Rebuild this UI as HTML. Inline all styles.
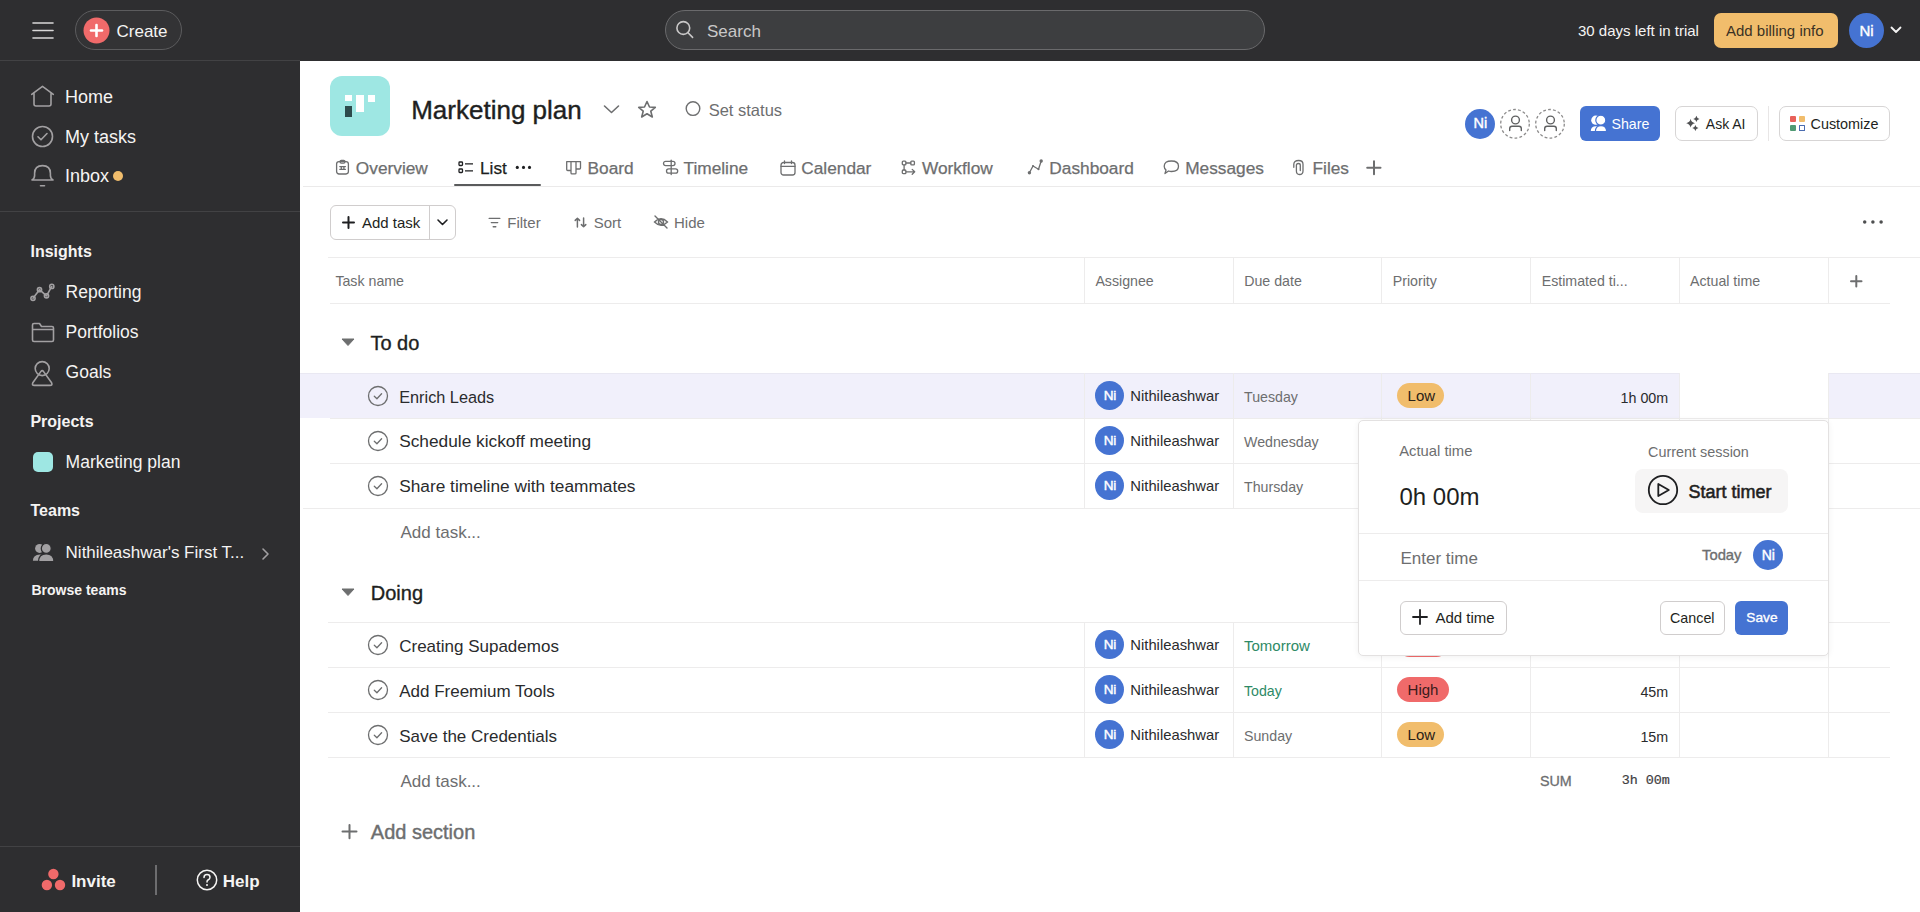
<!DOCTYPE html>
<html><head><meta charset="utf-8">
<style>
*{box-sizing:border-box;margin:0;padding:0}
html,body{width:1920px;height:912px;overflow:hidden;background:#fff;font-family:"Liberation Sans",sans-serif;position:relative}
.abs{position:absolute}
.t{position:absolute;white-space:nowrap;line-height:1}
svg{position:absolute;overflow:visible}
</style></head>
<body>
<div class="abs" style="left:0px;top:0px;width:1920px;height:61px;background:#2e2e30"></div>
<svg style="left:32px;top:22px;" width="22" height="17" viewBox="0 0 22 17"><g stroke="#d9d8d8" stroke-width="1.6" stroke-linecap="round"><line x1="1" y1="1" x2="21" y2="1"/><line x1="1" y1="8.5" x2="21" y2="8.5"/><line x1="1" y1="16" x2="21" y2="16"/></g></svg>
<div class="abs" style="left:75px;top:10px;width:107px;height:40px;border-radius:20px;border:1px solid #5c5c5e;background:#333335"></div>
<svg style="left:83px;top:17px;" width="27" height="27" viewBox="0 0 27 27"><circle cx="13.5" cy="13.5" r="13" fill="#f06a6a"/><g stroke="#fff" stroke-width="2.6" stroke-linecap="round"><line x1="13.5" y1="8" x2="13.5" y2="19"/><line x1="8" y1="13.5" x2="19" y2="13.5"/></g></svg>
<div class="t" style="left:116.50px;top:22.61px;font-size:17px;color:#f5f4f3;font-weight:400;font-family:'Liberation Sans',sans-serif;">Create</div>
<div class="abs" style="left:665px;top:10px;width:600px;height:40px;border-radius:20px;border:1px solid #6a6a6c;background:#3d3e40"></div>
<svg style="left:675px;top:19px;" width="20" height="20" viewBox="0 0 20 20"><circle cx="8.3" cy="9" r="6.4" stroke="#c9c8c8" stroke-width="1.6" fill="none"/><line x1="13" y1="13.7" x2="17.6" y2="18.4" stroke="#c9c8c8" stroke-width="1.6" stroke-linecap="round"/></svg>
<div class="t" style="left:707.00px;top:22.61px;font-size:17px;color:#c9c8c8;font-weight:400;font-family:'Liberation Sans',sans-serif;">Search</div>
<div class="t" style="left:1578.00px;top:23.30px;font-size:15px;color:#f5f4f3;font-weight:400;font-family:'Liberation Sans',sans-serif;">30 days left in trial</div>
<div class="abs" style="left:1714px;top:13px;width:124px;height:35px;border-radius:7px;background:#f1bd6c"></div>
<div class="t" style="left:1726.00px;top:23.30px;font-size:15px;color:#3b3224;font-weight:400;font-family:'Liberation Sans',sans-serif;">Add billing info</div>
<div class="abs" style="left:1849px;top:13px;width:35px;height:35px;border-radius:50%;background:#4573d2"></div>
<div class="t" style="left:1766.50px;width:200px;text-align:center;top:23.17px;font-size:15px;color:#fff;font-weight:400;font-family:'Liberation Sans',sans-serif;-webkit-text-stroke:0.4px #fff">Ni</div>
<svg style="left:1890px;top:26px;" width="12" height="8" viewBox="0 0 12 8"><polyline points="1.5,1.5 6,6 10.5,1.5" stroke="#f5f4f3" stroke-width="1.8" fill="none" stroke-linecap="round" stroke-linejoin="round"/></svg>
<div class="abs" style="left:0px;top:61px;width:300px;height:851px;background:#2e2e30"></div>
<div class="abs" style="left:0px;top:60px;width:300px;height:1px;background:#424244"></div>
<svg style="left:31px;top:86px;" width="23" height="22" viewBox="0 0 23 22"><path stroke="#a2a0a2" fill="none" stroke-width="1.6" stroke-linecap="round" stroke-linejoin="round" d="M0.7 8.3 L11.5 0.4 L22.3 8.3 M3 6.5 V18 Q3 20 5 20 H18 Q20 20 20 18 V6.5"/></svg>
<div class="t" style="left:65.00px;top:87.86px;font-size:18px;color:#f5f4f3;font-weight:400;font-family:'Liberation Sans',sans-serif;">Home</div>
<svg style="left:31px;top:125px;" width="23" height="23" viewBox="0 0 23 23"><circle stroke="#a2a0a2" fill="none" stroke-width="1.6" stroke-linecap="round" stroke-linejoin="round" cx="11.5" cy="11.5" r="10"/><polyline stroke="#a2a0a2" fill="none" stroke-width="1.6" stroke-linecap="round" stroke-linejoin="round" points="7,11.8 10,14.8 16,8.5"/></svg>
<div class="t" style="left:65.00px;top:127.76px;font-size:18px;color:#f5f4f3;font-weight:400;font-family:'Liberation Sans',sans-serif;">My tasks</div>
<svg style="left:31px;top:165px;" width="23" height="23" viewBox="0 0 23 23"><path stroke="#a2a0a2" fill="none" stroke-width="1.6" stroke-linecap="round" stroke-linejoin="round" d="M1 15 Q3.6 13.5 3.6 10.5 V8.3 Q3.6 0.6 11.5 0.6 Q19.4 0.6 19.4 8.3 V10.5 Q19.4 13.5 22 15 Z M9.5 20.8 H13.5"/></svg>
<div class="t" style="left:65.00px;top:167.46px;font-size:18px;color:#f5f4f3;font-weight:400;font-family:'Liberation Sans',sans-serif;">Inbox</div>
<div class="abs" style="left:113px;top:171px;width:10px;height:10px;border-radius:50%;background:#f1bd6c"></div>
<div class="abs" style="left:0px;top:211px;width:300px;height:1px;background:#424244"></div>
<div class="t" style="left:30.50px;top:243.66px;font-size:16px;color:#f5f4f3;font-weight:700;font-family:'Liberation Sans',sans-serif;">Insights</div>
<svg style="left:31px;top:283px;" width="24" height="18" viewBox="0 0 24 18"><path stroke="#a2a0a2" fill="none" stroke-width="1.6" stroke-linecap="round" stroke-linejoin="round" d="M2 15.3 L8.5 6.7 L15.5 12.8 L20.8 3.4"/><circle stroke="#a2a0a2" fill="none" stroke-width="1.6" stroke-linecap="round" stroke-linejoin="round" cx="2" cy="15.3" r="2.1" fill="#2e2e30"/><circle stroke="#a2a0a2" fill="none" stroke-width="1.6" stroke-linecap="round" stroke-linejoin="round" cx="8.5" cy="6.7" r="2.1" fill="#2e2e30"/><circle stroke="#a2a0a2" fill="none" stroke-width="1.6" stroke-linecap="round" stroke-linejoin="round" cx="15.5" cy="12.8" r="2.1" fill="#2e2e30"/><circle stroke="#a2a0a2" fill="none" stroke-width="1.6" stroke-linecap="round" stroke-linejoin="round" cx="20.8" cy="3.4" r="2.1" fill="#2e2e30"/></svg>
<div class="t" style="left:65.60px;top:284.49px;font-size:17.5px;color:#f5f4f3;font-weight:400;font-family:'Liberation Sans',sans-serif;">Reporting</div>
<svg style="left:31px;top:322px;" width="24" height="21" viewBox="0 0 24 21"><path stroke="#a2a0a2" fill="none" stroke-width="1.6" stroke-linecap="round" stroke-linejoin="round" d="M1.5 3 Q1.5 1.5 3 1.5 H8.5 L10.5 4.5 H21 Q22.5 4.5 22.5 6 V18 Q22.5 19.5 21 19.5 H3 Q1.5 19.5 1.5 18 Z M1.5 7.5 H22.5"/></svg>
<div class="t" style="left:65.60px;top:323.99px;font-size:17.5px;color:#f5f4f3;font-weight:400;font-family:'Liberation Sans',sans-serif;">Portfolios</div>
<svg style="left:31px;top:361.5px;" width="23" height="26" viewBox="0 0 23 26"><circle stroke="#a2a0a2" fill="none" stroke-width="1.6" stroke-linecap="round" stroke-linejoin="round" cx="11.2" cy="6.6" r="7"/><path stroke="#a2a0a2" fill="none" stroke-width="1.6" stroke-linecap="round" stroke-linejoin="round" d="M9.8 9.6 Q11.2 7.6 12.6 9.6 L20.6 20.8 Q21.8 23.4 19 23.4 H3.4 Q0.6 23.4 1.8 20.8 Z"/></svg>
<div class="t" style="left:65.60px;top:364.19px;font-size:17.5px;color:#f5f4f3;font-weight:400;font-family:'Liberation Sans',sans-serif;">Goals</div>
<div class="t" style="left:30.40px;top:413.66px;font-size:16px;color:#f5f4f3;font-weight:700;font-family:'Liberation Sans',sans-serif;">Projects</div>
<div class="abs" style="left:33px;top:452px;width:20px;height:20px;border-radius:5px;background:#9ee7e3"></div>
<div class="t" style="left:65.60px;top:454.19px;font-size:17.5px;color:#f5f4f3;font-weight:400;font-family:'Liberation Sans',sans-serif;">Marketing plan</div>
<div class="t" style="left:30.50px;top:503.46px;font-size:16px;color:#f5f4f3;font-weight:700;font-family:'Liberation Sans',sans-serif;">Teams</div>
<svg style="left:32px;top:543px;" width="22" height="18" viewBox="0 0 22 18"><g fill="#a2a0a2"><circle cx="7.6" cy="5.4" r="4.5"/><path d="M0.9 17.8 Q0.9 11.6 8 11.4 Q13 11.4 13 17.8 Z"/><path d="M6.6 18.6 Q6.6 10.8 14.2 10.8 Q21.9 10.8 21.9 18.6 Z" stroke="#2e2e30" stroke-width="1.3"/><circle cx="14.3" cy="5.4" r="5" stroke="#2e2e30" stroke-width="1.3"/></g></svg>
<div class="t" style="left:65.60px;top:544.41px;font-size:17px;color:#f5f4f3;font-weight:400;font-family:'Liberation Sans',sans-serif;">Nithileashwar's First T...</div>
<svg style="left:261px;top:547px;" width="9" height="14" viewBox="0 0 9 14"><polyline points="2,2 7,7 2,12" stroke="#a2a0a2" stroke-width="1.6" fill="none" stroke-linecap="round" stroke-linejoin="round"/></svg>
<div class="t" style="left:31.50px;top:583.35px;font-size:14px;color:#f5f4f3;font-weight:700;font-family:'Liberation Sans',sans-serif;">Browse teams</div>
<div class="abs" style="left:0px;top:846px;width:300px;height:1px;background:#424244"></div>
<svg style="left:41px;top:868px;" width="26" height="24" viewBox="0 0 26 24"><g fill="#f06a6a"><circle cx="12.4" cy="6" r="5.2"/><circle cx="5.9" cy="17" r="5.2"/><circle cx="19" cy="17" r="5.2"/></g></svg>
<div class="t" style="left:71.40px;top:872.51px;font-size:17px;color:#f5f4f3;font-weight:700;font-family:'Liberation Sans',sans-serif;">Invite</div>
<div class="abs" style="left:155px;top:865px;width:2px;height:30px;background:#6d6d6f"></div>
<svg style="left:196px;top:869px;" width="22" height="22" viewBox="0 0 22 22"><circle cx="11" cy="11" r="9.7" stroke="#f5f4f3" stroke-width="1.5" fill="none"/><path d="M8 8.5 Q8 5.5 11 5.5 Q14 5.5 14 8.2 Q14 10 12 11 Q11 11.6 11 13" stroke="#f5f4f3" stroke-width="1.5" fill="none" stroke-linecap="round"/><circle cx="11" cy="16" r="1" fill="#f5f4f3"/></svg>
<div class="t" style="left:222.70px;top:872.51px;font-size:17px;color:#f5f4f3;font-weight:700;font-family:'Liberation Sans',sans-serif;">Help</div>
<div class="abs" style="left:330px;top:76px;width:60px;height:60px;border-radius:12px;background:#9ee7e3"></div>
<div class="abs" style="left:345px;top:95px;width:7px;height:6px;background:#fff"></div>
<div class="abs" style="left:356px;top:95px;width:8px;height:17px;background:#fff"></div>
<div class="abs" style="left:368px;top:95px;width:7px;height:6.5px;background:#fff"></div>
<div class="abs" style="left:345px;top:106px;width:7px;height:11px;background:#2d4b4c"></div>
<div class="t" style="left:411.20px;top:96.79px;font-size:26px;color:#1e1f21;font-weight:400;font-family:'Liberation Sans',sans-serif;-webkit-text-stroke:0.4px #1e1f21">Marketing plan</div>
<svg style="left:603px;top:104px;" width="18" height="10" viewBox="0 0 18 10"><polyline stroke="#6d6e6f" fill="none" stroke-width="1.6" stroke-linecap="round" stroke-linejoin="round" points="1.5,2 8.5,8.5 15.5,2"/></svg>
<svg style="left:637px;top:100px;" width="20" height="19" viewBox="0 0 20 19"><path stroke="#6d6e6f" fill="none" stroke-width="1.6" stroke-linecap="round" stroke-linejoin="round" d="M10 1.5 L12.5 7 L18.3 7.4 L13.8 11.2 L15.3 17 L10 13.8 L4.7 17 L6.2 11.2 L1.7 7.4 L7.5 7 Z"/></svg>
<svg style="left:685px;top:101px;" width="16" height="16" viewBox="0 0 16 16"><circle cx="8" cy="7.6" r="6.8" stroke="#6d6e6f" stroke-width="1.4" fill="none"/></svg>
<div class="t" style="left:708.70px;top:101.73px;font-size:16.5px;color:#6d6e6f;font-weight:400;font-family:'Liberation Sans',sans-serif;">Set status</div>
<div class="abs" style="left:1465px;top:108.5px;width:30px;height:30px;border-radius:50%;background:#4573d2"></div>
<div class="t" style="left:1380.30px;width:200px;text-align:center;top:116.42px;font-size:14.5px;color:#fff;font-weight:400;font-family:'Liberation Sans',sans-serif;-webkit-text-stroke:0.45px #fff">Ni</div>
<svg style="left:1500px;top:109px;" width="30" height="30" viewBox="0 0 30 30"><circle cx="15" cy="14.8" r="14.3" stroke="#8c8b8b" stroke-width="1.3" fill="none" stroke-dasharray="2.8 2.2"/><circle cx="15.5" cy="11" r="3.9" stroke="#5f6061" stroke-width="1.4" fill="none"/><path d="M9.7 21.5 V19.6 Q9.7 17.3 12 17.3 H19 Q21.3 17.3 21.3 19.6 V21.5" stroke="#5f6061" stroke-width="1.4" fill="none" stroke-linecap="round"/></svg>
<svg style="left:1535px;top:109px;" width="30" height="30" viewBox="0 0 30 30"><circle cx="15" cy="14.8" r="14.3" stroke="#8c8b8b" stroke-width="1.3" fill="none" stroke-dasharray="2.8 2.2"/><circle cx="15.5" cy="11" r="3.9" stroke="#5f6061" stroke-width="1.4" fill="none"/><path d="M9.7 21.5 V19.6 Q9.7 17.3 12 17.3 H19 Q21.3 17.3 21.3 19.6 V21.5" stroke="#5f6061" stroke-width="1.4" fill="none" stroke-linecap="round"/></svg>
<div class="abs" style="left:1580px;top:106px;width:80px;height:35px;border-radius:6px;background:#4573d2"></div>
<svg style="left:1590px;top:114px;" width="17" height="18" viewBox="0 0 17 18"><g fill="#fff"><circle cx="5.8" cy="6.2" r="4.6"/><path d="M0.8 17 Q0.8 12.4 6 12.3 Q10 12.3 10 17 Z"/><path d="M5.4 17.6 Q5.4 11.7 11 11.7 Q16.6 11.7 16.6 17.6 Z" stroke="#4573d2" stroke-width="1.2"/><circle cx="10.8" cy="6.2" r="5" stroke="#4573d2" stroke-width="1.2"/></g></svg>
<div class="t" style="left:1611.50px;top:116.98px;font-size:14.2px;color:#fff;font-weight:400;font-family:'Liberation Sans',sans-serif;">Share</div>
<div class="abs" style="left:1675px;top:106px;width:83px;height:35px;border-radius:7px;border:1px solid #d7d5d5;background:#fff"></div>
<svg style="left:1686px;top:115px;" width="15" height="17" viewBox="0 0 15 17"><path fill="#505153" d="M4.6 3.799999999999999 Q5.303999999999999 7.4959999999999996 9.0 8.2 Q5.303999999999999 8.904 4.6 12.6 Q3.8959999999999995 8.904 0.1999999999999993 8.2 Q3.8959999999999995 7.4959999999999996 4.6 3.799999999999999Z M10.4 0.7999999999999998 Q10.896 3.404 13.5 3.9 Q10.896 4.396 10.4 7.0 Q9.904 4.396 7.300000000000001 3.9 Q9.904 3.404 10.4 0.7999999999999998Z M9.4 9.9 Q9.896 12.504 12.5 13 Q9.896 13.496 9.4 16.1 Q8.904 13.496 6.300000000000001 13 Q8.904 12.504 9.4 9.9Z"/></svg>
<div class="t" style="left:1705.80px;top:117.35px;font-size:14px;color:#1e1f21;font-weight:400;font-family:'Liberation Sans',sans-serif;">Ask AI</div>
<div class="abs" style="left:1768px;top:106px;width:1px;height:35px;background:#e8e6e6"></div>
<div class="abs" style="left:1779px;top:106px;width:111px;height:35px;border-radius:7px;border:1px solid #d7d5d5;background:#fff"></div>
<div class="abs" style="left:1790px;top:116px;width:5.9px;height:5.9px;background:#e8615a;border-radius:1px"></div>
<div class="abs" style="left:1799px;top:116px;width:5.9px;height:5.9px;background:#f1bd6c;border-radius:1px"></div>
<div class="abs" style="left:1790px;top:125px;width:5.9px;height:5.9px;background:#4f9a73;border-radius:1px"></div>
<div class="abs" style="left:1799px;top:125px;width:5.9px;height:5.9px;border:1.3px solid #4a6cb0;border-radius:0.5px"></div>
<div class="t" style="left:1810.50px;top:117.01px;font-size:14.4px;color:#1e1f21;font-weight:400;font-family:'Liberation Sans',sans-serif;">Customize</div>
<div class="abs" style="left:303px;top:186px;width:1617px;height:1px;background:#ebeaea"></div>
<svg style="left:335px;top:159px;" width="15" height="17" viewBox="0 0 15 17"><rect stroke="#6d6e6f" fill="none" stroke-width="1.3" stroke-linecap="round" stroke-linejoin="round" x="1.6" y="2.6" width="11.8" height="12.4" rx="2.4"/><rect stroke="#6d6e6f" fill="none" stroke-width="1.3" stroke-linecap="round" stroke-linejoin="round" fill="#fff" x="5" y="1.3" width="5" height="2.8" rx="1.3"/><path stroke="#6d6e6f" fill="none" stroke-width="1.3" stroke-linecap="round" stroke-linejoin="round" d="M4.8 7.6 H10.4 M4.8 10.3 H10.4 M6.3 7.6 V10.3 M8.9 7.6 V10.3" stroke-width="1.1"/></svg>
<div class="t" style="left:355.80px;top:160.36px;font-size:17.3px;color:#6d6e6f;font-weight:400;font-family:'Liberation Sans',sans-serif;-webkit-text-stroke:0.25px #6d6e6f">Overview</div>
<svg style="left:458px;top:161px;" width="16" height="13" viewBox="0 0 16 13"><rect stroke="#1e1f21" fill="none" stroke-width="1.3" x="1" y="1" width="3.5" height="3.5" rx="0.8"/><rect stroke="#1e1f21" fill="none" stroke-width="1.3" x="1" y="8" width="3.5" height="3.5" rx="0.8"/><path stroke="#1e1f21" stroke-width="1.3" d="M7 2.8 H15 M7 9.8 H15"/></svg>
<div class="t" style="left:480.00px;top:160.36px;font-size:17.3px;color:#1e1f21;font-weight:400;font-family:'Liberation Sans',sans-serif;-webkit-text-stroke:0.25px #1e1f21">List</div>
<svg style="left:512px;top:163px;" width="22" height="9" viewBox="0 0 22 9"><circle cx="5.3" cy="4.4" r="1.55" fill="#1e1f21"/><circle cx="11.5" cy="4.4" r="1.55" fill="#1e1f21"/><circle cx="17.5" cy="4.4" r="1.55" fill="#1e1f21"/></svg>
<div class="abs" style="left:454px;top:183.5px;width:87px;height:2.6px;background:#5a5b5c;border-radius:1px"></div>
<svg style="left:565px;top:160px;" width="17" height="15" viewBox="0 0 17 15"><path stroke="#6d6e6f" fill="none" stroke-width="1.3" stroke-linecap="round" stroke-linejoin="round" d="M1.7 1.6 H15.5 V8 Q15.5 9 14.5 9 H11 V12.9 Q11 13.9 10 13.9 H7 Q6 13.9 6 12.9 V10.5 H2.7 Q1.7 10.5 1.7 9.5 Z M6 1.6 V10.5 M11 1.6 V9"/></svg>
<div class="t" style="left:587.50px;top:160.36px;font-size:17.3px;color:#6d6e6f;font-weight:400;font-family:'Liberation Sans',sans-serif;-webkit-text-stroke:0.25px #6d6e6f">Board</div>
<svg style="left:662px;top:159px;" width="17" height="17" viewBox="0 0 17 17"><path stroke="#6d6e6f" fill="none" stroke-width="1.3" stroke-linecap="round" stroke-linejoin="round" d="M9.2 1.2 V15.5"/><rect stroke="#6d6e6f" fill="none" stroke-width="1.3" stroke-linecap="round" stroke-linejoin="round" x="1.5" y="2.4" width="11.5" height="4.2" rx="2.1"/><rect stroke="#6d6e6f" fill="none" stroke-width="1.3" stroke-linecap="round" stroke-linejoin="round" x="4.5" y="9.8" width="11.2" height="4.4" rx="2.2"/></svg>
<div class="t" style="left:683.50px;top:160.36px;font-size:17.3px;color:#6d6e6f;font-weight:400;font-family:'Liberation Sans',sans-serif;-webkit-text-stroke:0.25px #6d6e6f">Timeline</div>
<svg style="left:780px;top:160px;" width="16" height="16" viewBox="0 0 16 16"><rect stroke="#6d6e6f" fill="none" stroke-width="1.3" stroke-linecap="round" stroke-linejoin="round" x="1" y="2.5" width="14" height="12.5" rx="2.5"/><path stroke="#6d6e6f" fill="none" stroke-width="1.3" stroke-linecap="round" stroke-linejoin="round" d="M1 6.3 H15 M4.5 0.8 V3.5 M11.5 0.8 V3.5"/></svg>
<div class="t" style="left:801.25px;top:160.36px;font-size:17.3px;color:#6d6e6f;font-weight:400;font-family:'Liberation Sans',sans-serif;-webkit-text-stroke:0.25px #6d6e6f">Calendar</div>
<svg style="left:901px;top:160px;" width="16" height="15" viewBox="0 0 16 15"><rect stroke="#6d6e6f" fill="none" stroke-width="1.3" stroke-linecap="round" stroke-linejoin="round" x="1.3" y="1.2" width="3.6" height="3.6" rx="0.9"/><rect stroke="#6d6e6f" fill="none" stroke-width="1.3" stroke-linecap="round" stroke-linejoin="round" x="9.8" y="1.2" width="3.6" height="3.6" rx="0.9"/><rect stroke="#6d6e6f" fill="none" stroke-width="1.3" stroke-linecap="round" stroke-linejoin="round" x="1.3" y="10" width="3.6" height="3.6" rx="0.9"/><path stroke="#6d6e6f" fill="none" stroke-width="1.3" stroke-linecap="round" stroke-linejoin="round" d="M4.9 3 H9.8 M3.1 4.8 V10 M4.9 11.8 H13.6 M11.2 9.4 L13.7 11.8 L11.2 14.2"/></svg>
<div class="t" style="left:922.00px;top:160.36px;font-size:17.3px;color:#6d6e6f;font-weight:400;font-family:'Liberation Sans',sans-serif;-webkit-text-stroke:0.25px #6d6e6f">Workflow</div>
<svg style="left:1027px;top:159px;" width="17" height="17" viewBox="0 0 17 17"><path stroke="#6d6e6f" fill="none" stroke-width="1.3" stroke-linecap="round" stroke-linejoin="round" stroke-width="1.5" d="M2.4 13.8 L6 7 L11.5 10.3 L14.2 2"/><circle cx="2.4" cy="13.8" r="1.7" fill="#6d6e6f"/><circle cx="14.2" cy="2" r="1.7" fill="#6d6e6f"/><circle cx="6" cy="7" r="1" fill="#6d6e6f"/><circle cx="11.5" cy="10.3" r="1" fill="#6d6e6f"/></svg>
<div class="t" style="left:1049.30px;top:160.36px;font-size:17.3px;color:#6d6e6f;font-weight:400;font-family:'Liberation Sans',sans-serif;-webkit-text-stroke:0.25px #6d6e6f">Dashboard</div>
<svg style="left:1163px;top:160px;" width="17" height="15" viewBox="0 0 17 15"><path stroke="#6d6e6f" fill="none" stroke-width="1.3" stroke-linecap="round" stroke-linejoin="round" d="M8.5 1 Q15.5 1 15.5 6.3 Q15.5 11.5 8.5 11.5 Q7 11.5 5.5 11 L2 13.5 L3 10 Q1.2 8.5 1.2 6.3 Q1.2 1 8.5 1 Z"/></svg>
<div class="t" style="left:1185.20px;top:160.36px;font-size:17.3px;color:#6d6e6f;font-weight:400;font-family:'Liberation Sans',sans-serif;-webkit-text-stroke:0.25px #6d6e6f">Messages</div>
<svg style="left:1292px;top:159px;" width="13" height="17" viewBox="0 0 13 17"><path stroke="#6d6e6f" fill="none" stroke-width="1.3" stroke-linecap="round" stroke-linejoin="round" d="M1.8 8.3 V5.2 Q1.8 1.5 6.6 1.5 Q11 1.5 11 5.2 V12 Q11 15.5 7.5 15.5 Q4.4 15.5 4.4 12 V6.2 Q4.4 4.5 6.3 4.5 Q8.3 4.5 8.3 6.2 V11.6"/></svg>
<div class="t" style="left:1312.50px;top:160.36px;font-size:17.3px;color:#6d6e6f;font-weight:400;font-family:'Liberation Sans',sans-serif;-webkit-text-stroke:0.25px #6d6e6f">Files</div>
<svg style="left:1366px;top:160px;" width="16" height="16" viewBox="0 0 16 16"><path stroke="#6d6e6f" stroke-width="2" stroke-linecap="round" d="M8 1.2 V14.3 M1.2 7.8 H14.5"/></svg>
<div class="abs" style="left:330px;top:205px;width:126px;height:35px;border-radius:6px;border:1px solid #d0cdcd;background:#fff"></div>
<div class="abs" style="left:429px;top:205px;width:1px;height:35px;background:#d0cdcd"></div>
<svg style="left:342px;top:216px;" width="13" height="13" viewBox="0 0 13 13"><path stroke="#1e1f21" stroke-width="2" stroke-linecap="round" d="M6.5 1 V12 M1 6.5 H12"/></svg>
<div class="t" style="left:362.00px;top:215.40px;font-size:15px;color:#1e1f21;font-weight:400;font-family:'Liberation Sans',sans-serif;">Add task</div>
<svg style="left:436px;top:218px;" width="13" height="9" viewBox="0 0 13 9"><polyline stroke="#1e1f21" stroke-width="1.6" fill="none" stroke-linecap="round" stroke-linejoin="round" points="2,2 6.5,6.5 11,2"/></svg>
<svg style="left:488px;top:215px;" width="13" height="14" viewBox="0 0 13 14"><path stroke="#6d6e6f" stroke-width="1.4" stroke-linecap="round" d="M1.2 3.4 H11.8 M3.3 7.6 H9.7 M5.2 11.7 H7.8"/></svg>
<div class="t" style="left:507.30px;top:215.30px;font-size:15px;color:#6d6e6f;font-weight:400;font-family:'Liberation Sans',sans-serif;">Filter</div>
<svg style="left:573px;top:215px;" width="15" height="14" viewBox="0 0 15 14"><path stroke="#6d6e6f" stroke-width="1.5" stroke-linecap="round" stroke-linejoin="round" fill="none" d="M4.4 12 V3.2 M2.2 5.4 L4.4 3.2 L6.6 5.4 M10.6 3 V11.8 M8.4 9.6 L10.6 11.8 L12.8 9.6"/></svg>
<div class="t" style="left:593.75px;top:215.30px;font-size:15px;color:#6d6e6f;font-weight:400;font-family:'Liberation Sans',sans-serif;">Sort</div>
<svg style="left:653px;top:214px;" width="16" height="16" viewBox="0 0 16 16"><path stroke="#6d6e6f" stroke-width="1.4" stroke-linecap="round" fill="none" d="M1.5 8 Q8 1.5 14.5 8 Q8 14.5 1.5 8 Z M2 2 L14 14"/><circle cx="8" cy="8" r="2.5" stroke="#6d6e6f" stroke-width="1.4" fill="none"/></svg>
<div class="t" style="left:674.00px;top:215.30px;font-size:15px;color:#6d6e6f;font-weight:400;font-family:'Liberation Sans',sans-serif;">Hide</div>
<svg style="left:1858px;top:216px;" width="30" height="12" viewBox="0 0 30 12"><circle cx="6.7" cy="5.9" r="1.75" fill="#4e4f50"/><circle cx="14.9" cy="5.9" r="1.75" fill="#4e4f50"/><circle cx="23.1" cy="5.9" r="1.75" fill="#4e4f50"/></svg>
<div class="abs" style="left:328px;top:257px;width:1592px;height:1px;background:#edecec"></div>
<div class="abs" style="left:330px;top:303px;width:1560px;height:1px;background:#edecec"></div>
<div class="abs" style="left:1084px;top:257px;width:1px;height:46px;background:#edecec"></div>
<div class="abs" style="left:1233px;top:257px;width:1px;height:46px;background:#edecec"></div>
<div class="abs" style="left:1381px;top:257px;width:1px;height:46px;background:#edecec"></div>
<div class="abs" style="left:1530px;top:257px;width:1px;height:46px;background:#edecec"></div>
<div class="abs" style="left:1679px;top:257px;width:1px;height:46px;background:#edecec"></div>
<div class="abs" style="left:1828px;top:257px;width:1px;height:46px;background:#edecec"></div>
<div class="t" style="left:335.40px;top:273.78px;font-size:14.2px;color:#6d6e6f;font-weight:400;font-family:'Liberation Sans',sans-serif;">Task name</div>
<div class="t" style="left:1095.40px;top:273.78px;font-size:14.2px;color:#6d6e6f;font-weight:400;font-family:'Liberation Sans',sans-serif;">Assignee</div>
<div class="t" style="left:1244.20px;top:273.78px;font-size:14.2px;color:#6d6e6f;font-weight:400;font-family:'Liberation Sans',sans-serif;">Due date</div>
<div class="t" style="left:1392.70px;top:273.78px;font-size:14.2px;color:#6d6e6f;font-weight:400;font-family:'Liberation Sans',sans-serif;">Priority</div>
<div class="t" style="left:1541.70px;top:273.78px;font-size:14.2px;color:#6d6e6f;font-weight:400;font-family:'Liberation Sans',sans-serif;">Estimated ti...</div>
<div class="t" style="left:1690.00px;top:273.78px;font-size:14.2px;color:#6d6e6f;font-weight:400;font-family:'Liberation Sans',sans-serif;">Actual time</div>
<svg style="left:1849px;top:275px;" width="14" height="13" viewBox="0 0 14 13"><path stroke="#6d6e6f" stroke-width="2" stroke-linecap="round" d="M7.3 1 V11.5 M2 6.3 H12.5"/></svg>
<svg style="left:341px;top:338px;" width="14" height="9" viewBox="0 0 14 9"><path fill="#6d6e6f" d="M1 1 H13 L7 7.5 Z" stroke="#6d6e6f" stroke-width="1" stroke-linejoin="round"/></svg>
<div class="t" style="left:370.40px;top:332.87px;font-size:20px;color:#1e1f21;font-weight:400;font-family:'Liberation Sans',sans-serif;-webkit-text-stroke:0.35px #1e1f21">To do</div>
<div class="abs" style="left:300px;top:373px;width:1620px;height:45px;background:#f1f0fb"></div>
<div class="abs" style="left:300px;top:372.5px;width:1620px;height:1px;background:#e9e8f2"></div>
<div class="abs" style="left:1679px;top:373px;width:149px;height:45px;background:#fff"></div>
<div class="abs" style="left:330px;top:418px;width:1590px;height:1px;background:#edecec"></div>
<div class="abs" style="left:1084px;top:373px;width:1px;height:45px;background:#edecec"></div>
<div class="abs" style="left:1233px;top:373px;width:1px;height:45px;background:#edecec"></div>
<div class="abs" style="left:1381px;top:373px;width:1px;height:45px;background:#edecec"></div>
<div class="abs" style="left:1530px;top:373px;width:1px;height:45px;background:#edecec"></div>
<div class="abs" style="left:1679px;top:373px;width:1px;height:45px;background:#edecec"></div>
<div class="abs" style="left:1828px;top:373px;width:1px;height:45px;background:#edecec"></div>
<svg style="left:367px;top:384.5px;" width="22" height="22" viewBox="0 0 22 22"><circle cx="11" cy="11" r="9.5" stroke="#6d6e6f" stroke-width="1.3" fill="none"/><polyline points="7.3,11.3 9.9,13.7 14.6,8.7" stroke="#6d6e6f" stroke-width="1.3" fill="none" stroke-linecap="round" stroke-linejoin="round"/></svg>
<div class="t" style="left:399.20px;top:388.80px;font-size:16.3px;color:#2a2b2d;font-weight:400;font-family:'Liberation Sans',sans-serif;">Enrich Leads</div>
<div class="abs" style="left:1095.2px;top:381.0px;width:29px;height:29px;border-radius:50%;background:#4573d2"></div>
<div class="t" style="left:1010.00px;width:200px;text-align:center;top:388.91px;font-size:13.5px;color:#fff;font-weight:400;font-family:'Liberation Sans',sans-serif;-webkit-text-stroke:0.45px #fff">Ni</div>
<div class="t" style="left:1130.30px;top:388.77px;font-size:14.8px;color:#2a2b2d;font-weight:400;font-family:'Liberation Sans',sans-serif;">Nithileashwar</div>
<div class="t" style="left:1244.00px;top:389.98px;font-size:14.2px;color:#6d6e6f;font-weight:400;font-family:'Liberation Sans',sans-serif;">Tuesday</div>
<div class="abs" style="left:1397px;top:382.8px;width:47px;height:25px;border-radius:12.5px;background:#f1bd6c"></div>
<div class="t" style="left:1407.60px;top:387.90px;font-size:15px;color:#2a2218;font-weight:400;font-family:'Liberation Sans',sans-serif;">Low</div>
<div class="t" style="right:251.80px;top:391.20px;font-size:14.3px;color:#2a2b2d;font-weight:400;font-family:'Liberation Sans',sans-serif;">1h 00m</div>
<div class="abs" style="left:330px;top:463px;width:1590px;height:1px;background:#edecec"></div>
<div class="abs" style="left:1084px;top:418px;width:1px;height:45px;background:#edecec"></div>
<div class="abs" style="left:1233px;top:418px;width:1px;height:45px;background:#edecec"></div>
<div class="abs" style="left:1381px;top:418px;width:1px;height:45px;background:#edecec"></div>
<div class="abs" style="left:1530px;top:418px;width:1px;height:45px;background:#edecec"></div>
<div class="abs" style="left:1679px;top:418px;width:1px;height:45px;background:#edecec"></div>
<div class="abs" style="left:1828px;top:418px;width:1px;height:45px;background:#edecec"></div>
<svg style="left:367px;top:429.5px;" width="22" height="22" viewBox="0 0 22 22"><circle cx="11" cy="11" r="9.5" stroke="#6d6e6f" stroke-width="1.3" fill="none"/><polyline points="7.3,11.3 9.9,13.7 14.6,8.7" stroke="#6d6e6f" stroke-width="1.3" fill="none" stroke-linecap="round" stroke-linejoin="round"/></svg>
<div class="t" style="left:399.20px;top:432.96px;font-size:17.3px;color:#2a2b2d;font-weight:400;font-family:'Liberation Sans',sans-serif;">Schedule kickoff meeting</div>
<div class="abs" style="left:1095.2px;top:426.0px;width:29px;height:29px;border-radius:50%;background:#4573d2"></div>
<div class="t" style="left:1010.00px;width:200px;text-align:center;top:433.91px;font-size:13.5px;color:#fff;font-weight:400;font-family:'Liberation Sans',sans-serif;-webkit-text-stroke:0.45px #fff">Ni</div>
<div class="t" style="left:1130.30px;top:433.77px;font-size:14.8px;color:#2a2b2d;font-weight:400;font-family:'Liberation Sans',sans-serif;">Nithileashwar</div>
<div class="t" style="left:1244.00px;top:434.98px;font-size:14.2px;color:#6d6e6f;font-weight:400;font-family:'Liberation Sans',sans-serif;">Wednesday</div>
<div class="abs" style="left:303px;top:508px;width:1617px;height:1px;background:#edecec"></div>
<div class="abs" style="left:1084px;top:463px;width:1px;height:45px;background:#edecec"></div>
<div class="abs" style="left:1233px;top:463px;width:1px;height:45px;background:#edecec"></div>
<div class="abs" style="left:1381px;top:463px;width:1px;height:45px;background:#edecec"></div>
<div class="abs" style="left:1530px;top:463px;width:1px;height:45px;background:#edecec"></div>
<div class="abs" style="left:1679px;top:463px;width:1px;height:45px;background:#edecec"></div>
<div class="abs" style="left:1828px;top:463px;width:1px;height:45px;background:#edecec"></div>
<svg style="left:367px;top:474.5px;" width="22" height="22" viewBox="0 0 22 22"><circle cx="11" cy="11" r="9.5" stroke="#6d6e6f" stroke-width="1.3" fill="none"/><polyline points="7.3,11.3 9.9,13.7 14.6,8.7" stroke="#6d6e6f" stroke-width="1.3" fill="none" stroke-linecap="round" stroke-linejoin="round"/></svg>
<div class="t" style="left:399.20px;top:477.96px;font-size:17.3px;color:#2a2b2d;font-weight:400;font-family:'Liberation Sans',sans-serif;">Share timeline with teammates</div>
<div class="abs" style="left:1095.2px;top:471.0px;width:29px;height:29px;border-radius:50%;background:#4573d2"></div>
<div class="t" style="left:1010.00px;width:200px;text-align:center;top:478.91px;font-size:13.5px;color:#fff;font-weight:400;font-family:'Liberation Sans',sans-serif;-webkit-text-stroke:0.45px #fff">Ni</div>
<div class="t" style="left:1130.30px;top:478.77px;font-size:14.8px;color:#2a2b2d;font-weight:400;font-family:'Liberation Sans',sans-serif;">Nithileashwar</div>
<div class="t" style="left:1244.00px;top:479.98px;font-size:14.2px;color:#6d6e6f;font-weight:400;font-family:'Liberation Sans',sans-serif;">Thursday</div>
<div class="t" style="left:400.50px;top:523.51px;font-size:17px;color:#6d6e6f;font-weight:400;font-family:'Liberation Sans',sans-serif;">Add task...</div>
<svg style="left:341px;top:587.5px;" width="14" height="9" viewBox="0 0 14 9"><path fill="#6d6e6f" d="M1 1 H13 L7 7.5 Z" stroke="#6d6e6f" stroke-width="1" stroke-linejoin="round"/></svg>
<div class="t" style="left:370.80px;top:583.37px;font-size:20px;color:#1e1f21;font-weight:400;font-family:'Liberation Sans',sans-serif;-webkit-text-stroke:0.35px #1e1f21">Doing</div>
<div class="abs" style="left:328px;top:622px;width:1562px;height:1px;background:#edecec"></div>
<div class="abs" style="left:328px;top:667px;width:1562px;height:1px;background:#edecec"></div>
<div class="abs" style="left:1084px;top:622px;width:1px;height:45px;background:#edecec"></div>
<div class="abs" style="left:1233px;top:622px;width:1px;height:45px;background:#edecec"></div>
<div class="abs" style="left:1381px;top:622px;width:1px;height:45px;background:#edecec"></div>
<div class="abs" style="left:1530px;top:622px;width:1px;height:45px;background:#edecec"></div>
<div class="abs" style="left:1679px;top:622px;width:1px;height:45px;background:#edecec"></div>
<div class="abs" style="left:1828px;top:622px;width:1px;height:45px;background:#edecec"></div>
<svg style="left:367px;top:633.5px;" width="22" height="22" viewBox="0 0 22 22"><circle cx="11" cy="11" r="9.5" stroke="#6d6e6f" stroke-width="1.3" fill="none"/><polyline points="7.3,11.3 9.9,13.7 14.6,8.7" stroke="#6d6e6f" stroke-width="1.3" fill="none" stroke-linecap="round" stroke-linejoin="round"/></svg>
<div class="t" style="left:399.20px;top:637.61px;font-size:17px;color:#2a2b2d;font-weight:400;font-family:'Liberation Sans',sans-serif;">Creating Supademos</div>
<div class="abs" style="left:1095.2px;top:630.0px;width:29px;height:29px;border-radius:50%;background:#4573d2"></div>
<div class="t" style="left:1010.00px;width:200px;text-align:center;top:637.91px;font-size:13.5px;color:#fff;font-weight:400;font-family:'Liberation Sans',sans-serif;-webkit-text-stroke:0.45px #fff">Ni</div>
<div class="t" style="left:1130.30px;top:637.77px;font-size:14.8px;color:#2a2b2d;font-weight:400;font-family:'Liberation Sans',sans-serif;">Nithileashwar</div>
<div class="t" style="left:1244.00px;top:638.30px;font-size:15px;color:#2e8a66;font-weight:400;font-family:'Liberation Sans',sans-serif;">Tomorrow</div>
<div class="abs" style="left:1397px;top:632px;width:51.7px;height:25px;border-radius:12.5px;background:#f06a6a"></div>
<div class="t" style="left:1407.60px;top:637.10px;font-size:15px;color:#3b1b1b;font-weight:400;font-family:'Liberation Sans',sans-serif;">High</div>
<div class="t" style="right:251.80px;top:640.20px;font-size:14.3px;color:#2a2b2d;font-weight:400;font-family:'Liberation Sans',sans-serif;">1h 00m</div>
<div class="abs" style="left:328px;top:712px;width:1562px;height:1px;background:#edecec"></div>
<div class="abs" style="left:1084px;top:667px;width:1px;height:45px;background:#edecec"></div>
<div class="abs" style="left:1233px;top:667px;width:1px;height:45px;background:#edecec"></div>
<div class="abs" style="left:1381px;top:667px;width:1px;height:45px;background:#edecec"></div>
<div class="abs" style="left:1530px;top:667px;width:1px;height:45px;background:#edecec"></div>
<div class="abs" style="left:1679px;top:667px;width:1px;height:45px;background:#edecec"></div>
<div class="abs" style="left:1828px;top:667px;width:1px;height:45px;background:#edecec"></div>
<svg style="left:367px;top:678.5px;" width="22" height="22" viewBox="0 0 22 22"><circle cx="11" cy="11" r="9.5" stroke="#6d6e6f" stroke-width="1.3" fill="none"/><polyline points="7.3,11.3 9.9,13.7 14.6,8.7" stroke="#6d6e6f" stroke-width="1.3" fill="none" stroke-linecap="round" stroke-linejoin="round"/></svg>
<div class="t" style="left:399.20px;top:682.61px;font-size:17px;color:#2a2b2d;font-weight:400;font-family:'Liberation Sans',sans-serif;">Add Freemium Tools</div>
<div class="abs" style="left:1095.2px;top:675.0px;width:29px;height:29px;border-radius:50%;background:#4573d2"></div>
<div class="t" style="left:1010.00px;width:200px;text-align:center;top:682.91px;font-size:13.5px;color:#fff;font-weight:400;font-family:'Liberation Sans',sans-serif;-webkit-text-stroke:0.45px #fff">Ni</div>
<div class="t" style="left:1130.30px;top:682.77px;font-size:14.8px;color:#2a2b2d;font-weight:400;font-family:'Liberation Sans',sans-serif;">Nithileashwar</div>
<div class="t" style="left:1244.00px;top:683.98px;font-size:14.2px;color:#2e8a66;font-weight:400;font-family:'Liberation Sans',sans-serif;">Today</div>
<div class="abs" style="left:1397px;top:677px;width:51.7px;height:25px;border-radius:12.5px;background:#f06a6a"></div>
<div class="t" style="left:1407.60px;top:682.10px;font-size:15px;color:#3b1b1b;font-weight:400;font-family:'Liberation Sans',sans-serif;">High</div>
<div class="t" style="right:251.80px;top:685.20px;font-size:14.3px;color:#2a2b2d;font-weight:400;font-family:'Liberation Sans',sans-serif;">45m</div>
<div class="abs" style="left:328px;top:757px;width:1562px;height:1px;background:#edecec"></div>
<div class="abs" style="left:1084px;top:712px;width:1px;height:45px;background:#edecec"></div>
<div class="abs" style="left:1233px;top:712px;width:1px;height:45px;background:#edecec"></div>
<div class="abs" style="left:1381px;top:712px;width:1px;height:45px;background:#edecec"></div>
<div class="abs" style="left:1530px;top:712px;width:1px;height:45px;background:#edecec"></div>
<div class="abs" style="left:1679px;top:712px;width:1px;height:45px;background:#edecec"></div>
<div class="abs" style="left:1828px;top:712px;width:1px;height:45px;background:#edecec"></div>
<svg style="left:367px;top:723.5px;" width="22" height="22" viewBox="0 0 22 22"><circle cx="11" cy="11" r="9.5" stroke="#6d6e6f" stroke-width="1.3" fill="none"/><polyline points="7.3,11.3 9.9,13.7 14.6,8.7" stroke="#6d6e6f" stroke-width="1.3" fill="none" stroke-linecap="round" stroke-linejoin="round"/></svg>
<div class="t" style="left:399.20px;top:727.61px;font-size:17px;color:#2a2b2d;font-weight:400;font-family:'Liberation Sans',sans-serif;">Save the Credentials</div>
<div class="abs" style="left:1095.2px;top:720.0px;width:29px;height:29px;border-radius:50%;background:#4573d2"></div>
<div class="t" style="left:1010.00px;width:200px;text-align:center;top:727.91px;font-size:13.5px;color:#fff;font-weight:400;font-family:'Liberation Sans',sans-serif;-webkit-text-stroke:0.45px #fff">Ni</div>
<div class="t" style="left:1130.30px;top:727.77px;font-size:14.8px;color:#2a2b2d;font-weight:400;font-family:'Liberation Sans',sans-serif;">Nithileashwar</div>
<div class="t" style="left:1244.00px;top:728.98px;font-size:14.2px;color:#6d6e6f;font-weight:400;font-family:'Liberation Sans',sans-serif;">Sunday</div>
<div class="abs" style="left:1397px;top:722px;width:47px;height:25px;border-radius:12.5px;background:#f1bd6c"></div>
<div class="t" style="left:1407.60px;top:727.10px;font-size:15px;color:#2a2218;font-weight:400;font-family:'Liberation Sans',sans-serif;">Low</div>
<div class="t" style="right:251.80px;top:730.20px;font-size:14.3px;color:#2a2b2d;font-weight:400;font-family:'Liberation Sans',sans-serif;">15m</div>
<div class="t" style="left:400.50px;top:773.41px;font-size:17px;color:#6d6e6f;font-weight:400;font-family:'Liberation Sans',sans-serif;">Add task...</div>
<div class="t" style="left:1540.00px;top:773.70px;font-size:14.3px;color:#6d6e6f;font-weight:400;font-family:'Liberation Sans',sans-serif;-webkit-text-stroke:0.3px #6d6e6f">SUM</div>
<div class="t" style="left:1621.70px;top:773.66px;font-size:13.4px;color:#3f4042;font-weight:400;font-family:'Liberation Mono',monospace;-webkit-text-stroke:0.2px #3f4042">3h 00m</div>
<svg style="left:341px;top:824px;" width="17" height="16" viewBox="0 0 17 16"><path stroke="#6d6e6f" stroke-width="2" stroke-linecap="round" d="M8.5 1 V14.3 M1.5 7.6 H15.5"/></svg>
<div class="t" style="left:370.80px;top:822.27px;font-size:20px;color:#6d6e6f;font-weight:400;font-family:'Liberation Sans',sans-serif;-webkit-text-stroke:0.4px #6d6e6f">Add section</div>
<div class="abs" style="left:1357.5px;top:419.5px;width:471.5px;height:236.5px;border-radius:5px;border:1px solid #e3e1e1;background:#fff;box-shadow:0 1px 6px rgba(0,0,0,0.06)"></div>
<div class="t" style="left:1399.20px;top:444.37px;font-size:14.8px;color:#6d6e6f;font-weight:400;font-family:'Liberation Sans',sans-serif;">Actual time</div>
<div class="t" style="left:1399.50px;top:485.18px;font-size:24px;color:#1e1f21;font-weight:400;font-family:'Liberation Sans',sans-serif;">0h 00m</div>
<div class="t" style="left:1648.10px;top:444.71px;font-size:14.4px;color:#6d6e6f;font-weight:400;font-family:'Liberation Sans',sans-serif;">Current session</div>
<div class="abs" style="left:1634.5px;top:469px;width:153px;height:44px;border-radius:8px;background:#f6f5f5"></div>
<svg style="left:1647px;top:474px;" width="32" height="32" viewBox="0 0 32 32"><circle cx="16" cy="16" r="14.2" stroke="#1e1f21" stroke-width="1.8" fill="none"/><path d="M11.3 10 V22 L21.8 16 Z" stroke="#1e1f21" stroke-width="1.8" fill="none" stroke-linejoin="round"/></svg>
<div class="t" style="left:1688.50px;top:482.86px;font-size:18px;color:#1e1f21;font-weight:400;font-family:'Liberation Sans',sans-serif;-webkit-text-stroke:0.55px #1e1f21">Start timer</div>
<div class="abs" style="left:1359px;top:533px;width:469px;height:1px;background:#edecec"></div>
<div class="t" style="left:1400.50px;top:550.11px;font-size:17px;color:#6d6e6f;font-weight:400;font-family:'Liberation Sans',sans-serif;">Enter time</div>
<div class="t" style="left:1702.00px;top:547.97px;font-size:14.8px;color:#6d6e6f;font-weight:400;font-family:'Liberation Sans',sans-serif;-webkit-text-stroke:0.35px #6d6e6f">Today</div>
<div class="abs" style="left:1753.0px;top:540.0px;width:30px;height:30px;border-radius:50%;background:#4573d2"></div>
<div class="t" style="left:1668.30px;width:200px;text-align:center;top:548.16px;font-size:14px;color:#fff;font-weight:400;font-family:'Liberation Sans',sans-serif;-webkit-text-stroke:0.45px #fff">Ni</div>
<div class="abs" style="left:1359px;top:580px;width:469px;height:1px;background:#edecec"></div>
<div class="abs" style="left:1399.5px;top:600.5px;width:107px;height:34px;border-radius:6px;border:1px solid #d0cdcd;background:#fff"></div>
<svg style="left:1412px;top:609px;" width="16" height="16" viewBox="0 0 16 16"><path stroke="#1e1f21" stroke-width="1.8" stroke-linecap="round" d="M8 1 V15 M1 8 H15"/></svg>
<div class="t" style="left:1435.50px;top:610.30px;font-size:15px;color:#1e1f21;font-weight:400;font-family:'Liberation Sans',sans-serif;">Add time</div>
<div class="abs" style="left:1659.5px;top:600.5px;width:65px;height:34px;border-radius:6px;border:1px solid #d0cdcd;background:#fff"></div>
<div class="t" style="left:1670.00px;top:610.90px;font-size:14.3px;color:#1e1f21;font-weight:400;font-family:'Liberation Sans',sans-serif;">Cancel</div>
<div class="abs" style="left:1735px;top:600.5px;width:53px;height:34px;border-radius:6px;background:#4573d2"></div>
<div class="t" style="left:1746.30px;top:611.40px;font-size:13.7px;color:#fff;font-weight:400;font-family:'Liberation Sans',sans-serif;-webkit-text-stroke:0.35px #fff">Save</div>
</body></html>
